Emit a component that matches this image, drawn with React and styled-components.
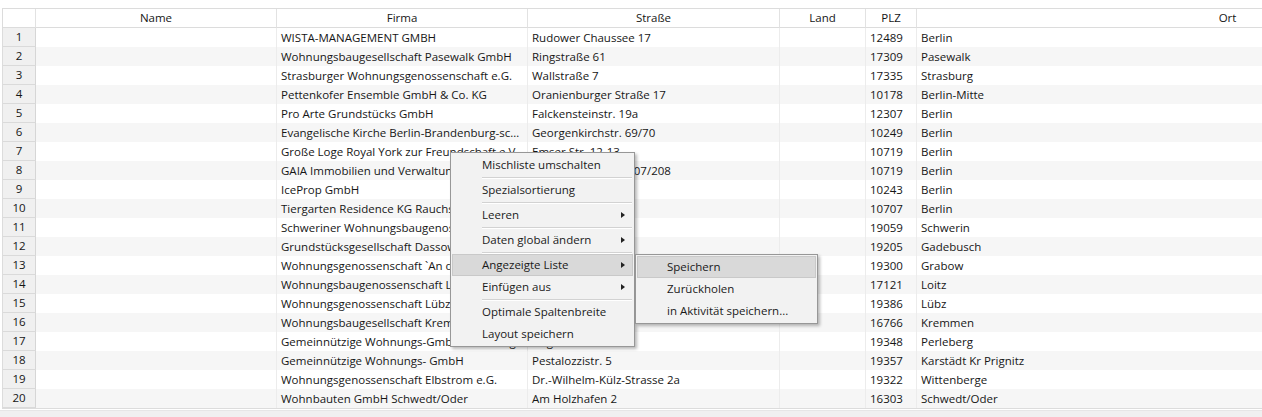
import React from 'react';
import styled, { createGlobalStyle } from 'styled-components';

const GlobalStyle = createGlobalStyle`
  html, body {
    margin: 0;
    padding: 0;
    background: #ffffff;
    overflow: hidden;
  }
  body {
    font-family: "Open Sans", "Noto Sans", sans-serif;
    font-size: 11.5px;
    color: #161616;
  }
`;

const Page = styled.div`
  position: relative;
  width: 1262px;
  height: 417px;
  padding: 8px 0 0 2px;
  box-sizing: border-box;
  overflow: hidden;
`;

const COLS = '33px 241px 251px 252px 86px 51px 622px';

const Grid = styled.div`
  display: grid;
  grid-template-columns: ${COLS};
  border-top: 1px solid #dcdcdc;
  border-left: 1px solid #dcdcdc;
  border-bottom: 1px solid #dcdcdc;
  width: max-content;
`;

const HeadCell = styled.div`
  height: 18px;
  line-height: 18px;
  text-align: center;
  background: #ffffff;
  border-right: 1px solid #e2e2e2;
  border-bottom: 1px solid #dcdcdc;
  white-space: nowrap;
  overflow: hidden;
`;

const NumCell = styled.div`
  height: 18px;
  line-height: 18px;
  text-align: center;
  background: #f0f0f0;
  border-right: 1px solid #d6d6d6;
  border-bottom: 1px solid #dadada;
`;

const Cell = styled.div`
  height: 19px;
  line-height: 19px;
  padding: 0 4px;
  background: ${p => (p.$odd ? '#f6f6f6' : '#ffffff')};
  border-right: 1px solid #ececec;
  white-space: nowrap;
  overflow: hidden;
  text-overflow: ellipsis;
  box-sizing: border-box;
`;

const ScrollStrip = styled.div`
  height: 10px;
  margin-top: 1px;
  margin-left: -2px;
  background: #f0f0f0;
  border-top: 1px solid #e6e6e6;
`;

const Menu = styled.div`
  position: absolute;
  left: ${p => p.$x}px;
  top: ${p => p.$y}px;
  width: ${p => p.$w}px;
  background: #f2f2f2;
  border: 1px solid #979797;
  padding: 1px;
  box-shadow: 2px 2px 3px rgba(0, 0, 0, 0.28);
  box-sizing: border-box;
`;

const Item = styled.div`
  position: relative;
  height: 22px;
  line-height: 22px;
  padding-left: ${p => p.$indent}px;
  background: ${p => (p.$active ? '#d9d9d9' : 'transparent')};
  outline: ${p => (p.$active ? '1px solid #c9c9c9' : 'none')};
  outline-offset: -1px;
  white-space: nowrap;
  color: #1a1a1a;
`;

const Arrow = styled.span`
  position: absolute;
  right: 8px;
  top: 8px;
  width: 0;
  height: 0;
  border-top: 3px solid transparent;
  border-bottom: 3px solid transparent;
  border-left: 4px solid #222;
`;

const Separator = styled.div`
  height: 1px;
  margin: 1px 1px 0 30px;
  background: #d2d2d2;
  border-bottom: 1px solid #ffffff;
`;

const headers = ['', 'Name', 'Firma', 'Straße', 'Land', 'PLZ', 'Ort'];

const rows = [
  ['WISTA-MANAGEMENT GMBH', 'Rudower Chaussee 17', '12489', 'Berlin'],
  ['Wohnungsbaugesellschaft Pasewalk GmbH', 'Ringstraße 61', '17309', 'Pasewalk'],
  ['Strasburger Wohnungsgenossenschaft e.G.', 'Wallstraße 7', '17335', 'Strasburg'],
  ['Pettenkofer Ensemble GmbH & Co. KG', 'Oranienburger Straße 17', '10178', 'Berlin-Mitte'],
  ['Pro Arte Grundstücks GmbH', 'Falckensteinstr. 19a', '12307', 'Berlin'],
  ['Evangelische Kirche Berlin-Brandenburg-schlesische Oberlausitz', 'Georgenkirchstr. 69/70', '10249', 'Berlin'],
  ['Große Loge Royal York zur Freundschaft e.V.', 'Emser Str. 12-13', '10719', 'Berlin'],
  ['GAIA Immobilien und Verwaltungs GmbH', 'Kurfürstendamm 207/208', '10719', 'Berlin'],
  ['IceProp GmbH', 'Kurfürstenstr. 79', '10243', 'Berlin'],
  ['Tiergarten Residence KG Rauchstraße', 'Rauchstraße 2', '10707', 'Berlin'],
  ['Schweriner Wohnungsbaugenossenschaft eG', 'Wismarsche Str. 35', '19059', 'Schwerin'],
  ['Grundstücksgesellschaft Dassow mbH', 'Lübecker Str. 1', '19205', 'Gadebusch'],
  ['Wohnungsgenossenschaft `An der Elde` eG', 'Marktstraße 4', '19300', 'Grabow'],
  ['Wohnungsbaugenossenschaft Loitz eG', 'Lange Str. 20', '17121', 'Loitz'],
  ['Wohnungsgenossenschaft Lübz eG', 'Plauer Str. 9', '19386', 'Lübz'],
  ['Wohnungsbaugesellschaft Kremmen mbH', 'Ruppiner Str. 3', '16766', 'Kremmen'],
  ['Gemeinnützige Wohnungs-GmbH Perleberg', 'Hagenstr. 12-13', '19348', 'Perleberg'],
  ['Gemeinnützige Wohnungs- GmbH', 'Pestalozzistr. 5', '19357', 'Karstädt Kr Prignitz'],
  ['Wohnungsgenossenschaft Elbstrom e.G.', 'Dr.-Wilhelm-Külz-Strasse 2a', '19322', 'Wittenberge'],
  ['Wohnbauten GmbH Schwedt/Oder', 'Am Holzhafen 2', '16303', 'Schwedt/Oder'],
];

const mainMenu = [
  { label: 'Mischliste umschalten' },
  { sep: true },
  { label: 'Spezialsortierung' },
  { sep: true },
  { label: 'Leeren', sub: true },
  { sep: true },
  { label: 'Daten global ändern', sub: true },
  { sep: true },
  { label: 'Angezeigte Liste', sub: true, active: true },
  { label: 'Einfügen aus', sub: true },
  { sep: true },
  { label: 'Optimale Spaltenbreite' },
  { label: 'Layout speichern' },
];

const subMenu = [
  { label: 'Speichern', active: true },
  { label: 'Zurückholen' },
  { label: 'in Aktivität speichern...' },
];

const MenuList = ({ items, x, y, w, indent }) => (
  <Menu $x={x} $y={y} $w={w}>
    {items.map((it, i) =>
      it.sep ? (
        <Separator key={i} />
      ) : (
        <Item key={i} $active={it.active} $indent={indent}>
          {it.label}
          {it.sub && <Arrow />}
        </Item>
      )
    )}
  </Menu>
);

const App = () => (
  <>
    <GlobalStyle />
    <Page>
      <Grid>
        {headers.map((h, i) => (
          <HeadCell key={i}>{h}</HeadCell>
        ))}
        {rows.map((r, i) => {
          const odd = i % 2 === 1;
          return (
            <React.Fragment key={i}>
              <NumCell>{i + 1}</NumCell>
              <Cell $odd={odd} />
              <Cell $odd={odd}>{r[0]}</Cell>
              <Cell $odd={odd}>{r[1]}</Cell>
              <Cell $odd={odd} />
              <Cell $odd={odd}>{r[2]}</Cell>
              <Cell $odd={odd}>{r[3]}</Cell>
            </React.Fragment>
          );
        })}
      </Grid>
      <ScrollStrip />
      <MenuList items={mainMenu} x={450} y={152} w={185} indent={30} />
      <MenuList items={subMenu} x={635} y={254} w={183} indent={30} />
    </Page>
  </>
);

export default App;
